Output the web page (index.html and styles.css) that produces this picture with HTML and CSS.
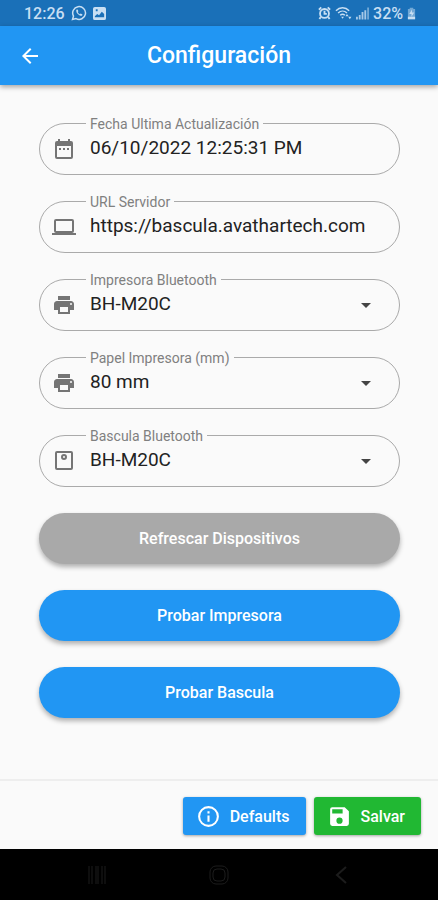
FILE: index.html
```html
<!DOCTYPE html>
<html lang="es">
<head>
  <meta charset="UTF-8">
  <meta name="viewport" content="width=device-width, initial-scale=1.0">
  <title>Configuración</title>
  <link rel="stylesheet" href="styles.css">
</head>
<body>
  <div class="status-bar">
    <div class="status-left">
      <span>12:26</span>
      <svg width="16" height="16" viewBox="0 0 16 16" fill="none" stroke="currentColor" stroke-width="1.5">
        <path d="M1.5 14.5l1-3.4A6.4 6.4 0 1 1 5 13.6z"/>
        <path d="M5.3 4.8c-.6 3 2.6 6.4 5.7 6l.5-1.4-1.8-1-.9.8C7.7 8.7 7 7.900 6.700 7.100l.7-.8-.8-1.800z" fill="currentColor" stroke="none"/>
      </svg>
      <svg width="13" height="13" viewBox="0 0 14 14" fill="currentColor">
        <path fill-rule="evenodd" d="M2 0h10a2 2 0 0 1 2 2v10a2 2 0 0 1-2 2H2a2 2 0 0 1-2-2V2a2 2 0 0 1 2-2zm0 11h10V7.500L9.500 5 6.500 9 4.500 7.500 2 10zM3 2.500v2h2v-2z"/>
      </svg>
    </div>
    <div class="status-right">
      <svg width="13" height="14" viewBox="0 0 14 14" fill="none" stroke="currentColor" stroke-width="2">
        <circle cx="7" cy="7.500" r="4.800"/>
        <path d="M7 4.500V8h2.500M1 3.500L3.500 1M13 3.500L10.500 1M3 11.500l-1.500 2M11 11.500l1.500 2"/>
      </svg>
      <svg width="17" height="14" viewBox="0 0 18 14" fill="none" stroke="currentColor" stroke-width="1.500">
        <path d="M1 4.500c4-4 10-4 14 0M3.300 7c2.800-2.700 6.600-2.700 9.400 0M5.500 9.400c1.500-1.400 3.500-1.400 5 0"/>
        <path d="M6.500 11h3L8 13zM11 10.500l1.700-2.500 1.700 2.500zM14 11h3.400l-1.700 2.500z" fill="currentColor" stroke="none"/>
      </svg>
      <svg width="13" height="13" viewBox="0 0 14 13" fill="currentColor">
        <path d="M0 10h2v3H0zM3 8h2v5H3zM6 5h2v8H6zM9 3h2v10H9z" opacity=".8"/>
        <path d="M12 0h2v13h-2z" opacity=".5"/>
      </svg>
      <span>32%</span>
      <svg width="9" height="13" viewBox="0 0 10 13" fill="currentColor">
        <path d="M3 0h4v1.500h2V13H1V1.500h2z" opacity=".5"/>
        <path d="M5.500 2L2.500 7H5v3l3-4.500H5.500zM1 10h8v3H1z"/>
      </svg>
    </div>
  </div>

  <header class="app-bar">
    <button class="back-btn" type="button" aria-label="Volver">
      <svg width="24" height="24" viewBox="0 0 24 24" fill="currentColor"><path d="M20 11H7.830l5.590-5.590L12 4l-8 8 8 8 1.410-1.410L7.830 13H20v-2z"/></svg>
    </button>
    <h1>Configuración</h1>
  </header>

  <main class="settings">
    <div class="field">
      <label for="fecha">Fecha Ultima Actualización</label>
      <svg class="field-icon" viewBox="0 0 24 24"><path d="M19 4h-1V2h-2v2H8V2H6v2H5a2 2 0 0 0-2 2v14a2 2 0 0 0 2 2h14a2 2 0 0 0 2-2V6a2 2 0 0 0-2-2zm0 16H5V9h14v11zM7 11h2v2H7zm4 0h2v2h-2zm4 0h2v2h-2z"/></svg>
      <input id="fecha" type="text" value="06/10/2022 12:25:31 PM" readonly>
    </div>

    <div class="field">
      <label for="url">URL Servidor</label>
      <svg class="field-icon" viewBox="0 0 24 24"><path d="M20 18a2 2 0 0 0 2-2V6a2 2 0 0 0-2-2H4a2 2 0 0 0-2 2v10a2 2 0 0 0 2 2H0v2h24v-2h-4zM4 6h16v10H4V6z"/></svg>
      <input id="url" type="text" value="https://bascula.avathartech.com">
    </div>

    <div class="field">
      <label for="impresora">Impresora Bluetooth</label>
      <svg class="field-icon" viewBox="0 0 24 24"><path d="M19 8H5c-1.660 0-3 1.340-3 3v6h4v4h12v-4h4v-6c0-1.660-1.340-3-3-3zm-3 11H8v-5h8v5zm3-7a1 1 0 1 1 0-2 1 1 0 0 1 0 2zm-1-9H6v4h12V3z"/></svg>
      <select id="impresora">
        <option>BH-M20C</option>
      </select>
      <svg class="arrow" viewBox="0 0 24 24"><path d="M7 10l5 5 5-5z"/></svg>
    </div>

    <div class="field">
      <label for="papel">Papel Impresora (mm)</label>
      <svg class="field-icon" viewBox="0 0 24 24"><path d="M19 8H5c-1.660 0-3 1.340-3 3v6h4v4h12v-4h4v-6c0-1.660-1.340-3-3-3zm-3 11H8v-5h8v5zm3-7a1 1 0 1 1 0-2 1 1 0 0 1 0 2zm-1-9H6v4h12V3z"/></svg>
      <select id="papel">
        <option>80 mm</option>
      </select>
      <svg class="arrow" viewBox="0 0 24 24"><path d="M7 10l5 5 5-5z"/></svg>
    </div>

    <div class="field">
      <label for="bascula">Bascula Bluetooth</label>
      <svg class="field-icon" viewBox="0 0 24 24"><path fill-rule="evenodd" d="M5 2h14a2 2 0 0 1 2 2v15a2 2 0 0 1-2 2H5a2 2 0 0 1-2-2V4a2 2 0 0 1 2-2zm0 2v15h14V4zM12 5a3 3 0 1 1 0 6 3 3 0 0 1 0-6zm0 2a1 1 0 1 0 0 2 1 1 0 0 0 0-2z"/></svg>
      <select id="bascula">
        <option>BH-M20C</option>
      </select>
      <svg class="arrow" viewBox="0 0 24 24"><path d="M7 10l5 5 5-5z"/></svg>
    </div>

    <button class="pill pill-gray" type="button">Refrescar Dispositivos</button>
    <button class="pill" type="button">Probar Impresora</button>
    <button class="pill" type="button">Probar Bascula</button>
  </main>

  <footer class="actions">
    <button class="action" type="button">
      <svg viewBox="0 0 24 24"><path d="M11 7h2v2h-2zm0 4h2v6h-2zm1-9a10 10 0 1 0 0 20 10 10 0 0 0 0-20zm0 18a8 8 0 1 1 0-16 8 8 0 0 1 0 16z"/></svg>
      Defaults
    </button>
    <button class="action action-green" type="button">
      <svg viewBox="0 0 24 24"><path d="M17 3H5a2 2 0 0 0-2 2v14a2 2 0 0 0 2 2h14a2 2 0 0 0 2-2V7l-4-4zm-5 16a3 3 0 1 1 0-6 3 3 0 0 1 0 6zm3-10H5V5h10v4z"/></svg>
      Salvar
    </button>
  </footer>

  <nav class="nav-bar">
    <button type="button" aria-label="Recientes">
      <svg viewBox="0 0 20 20"><path d="M2 1v18M5 1v18M9 1v18M11 1v18M15 1v18M18 1v18"/></svg>
    </button>
    <button type="button" aria-label="Inicio">
      <svg viewBox="0 0 20 20"><rect x="1" y="1" width="18" height="18" rx="6"/><rect x="4" y="4" width="12" height="12" rx="4"/></svg>
    </button>
    <button type="button" aria-label="Atrás">
      <svg viewBox="0 0 20 20"><path d="M15 2L6 10l9 8" stroke-width="2"/></svg>
    </button>
  </nav>
</body>
</html>
```

FILE: styles.css
```css
* {
  box-sizing: border-box;
}

body {
  margin: 0;
  min-height: 100vh;
  display: flex;
  flex-direction: column;
  font-family: Roboto, "Liberation Sans", sans-serif;
  background-color: #fafafa;
}

button {
  font-family: inherit;
  border: none;
  cursor: pointer;
}

/* Phone status bar */
.status-bar {
  display: flex;
  justify-content: space-between;
  align-items: center;
  height: 26px;
  padding: 0 22px 0 24px;
  background-color: #1a70b8;
  color: #c8dff3;
  font-size: 16px;
  font-weight: 500;
}

.status-left {
  display: flex;
  align-items: center;
  gap: 6px;
}

.status-right {
  display: flex;
  align-items: center;
  gap: 4px;
}

/* Title bar */
.app-bar {
  display: grid;
  grid-template-columns: 48px 1fr 48px;
  align-items: center;
  height: 59px;
  padding: 0 6px;
  background-color: #2196f3;
  color: #fff;
  box-shadow: 0 2px 5px rgba(0, 0, 0, 0.35);
}

.app-bar h1 {
  margin: 0;
  font-size: 23px;
  font-weight: 500;
  text-align: center;
}

.back-btn {
  display: flex;
  justify-content: center;
  padding: 12px;
  background: none;
  color: inherit;
}

/* Form */
.settings {
  flex: 1;
  display: flex;
  flex-direction: column;
  gap: 26px;
  padding: 38px 38px 26px 39px;
}

.field {
  position: relative;
  display: flex;
  align-items: center;
  height: 52px;
  padding: 0 21px 0 12px;
  border: 1px solid #aaa;
  border-radius: 26px;
}

.field label {
  position: absolute;
  top: -8px;
  left: 46px;
  padding: 0 4px;
  background-color: #fafafa;
  color: #808080;
  font-size: 14px;
  line-height: 16px;
}

.field-icon {
  flex: none;
  width: 24px;
  height: 24px;
  fill: #757575;
}

.field input,
.field select {
  flex: 1;
  min-width: 0;
  height: 48px;
  margin-left: 14px;
  padding: 0 0 4px;
  border: none;
  outline: none;
  background: none;
  color: #222;
  font-family: inherit;
  font-size: 19px;
  appearance: none;
}

.arrow {
  flex: none;
  width: 24px;
  height: 24px;
  fill: #444;
  pointer-events: none;
}

.pill {
  height: 51px;
  border-radius: 26px;
  background-color: #2196f3;
  color: #fff;
  font-size: 16px;
  font-weight: 500;
  box-shadow: 0 3px 5px rgba(0, 0, 0, 0.3);
}

.pill-gray {
  background-color: #a9a9a9;
}

/* Bottom buttons */
.actions {
  display: flex;
  justify-content: flex-end;
  gap: 8px;
  padding: 16px 17px 14px;
  border-top: 2px solid #eee;
}

.action {
  display: flex;
  align-items: center;
  gap: 9px;
  height: 38px;
  padding: 0 16px 0 13px;
  border-radius: 3px;
  background-color: #2196f3;
  color: #fff;
  font-size: 16px;
  font-weight: 500;
  box-shadow: 0 1px 3px rgba(0, 0, 0, 0.35);
}

.action svg {
  width: 25px;
  height: 25px;
  fill: currentColor;
}

.action-green {
  background-color: #21b833;
}

/* Phone navigation buttons */
.nav-bar {
  display: flex;
  justify-content: space-around;
  align-items: center;
  height: 51px;
  padding: 0 36px;
  background-color: #000;
}

.nav-bar button {
  display: flex;
  padding: 10px;
  background: none;
}

.nav-bar svg {
  width: 20px;
  height: 20px;
  fill: none;
  stroke: #1c1c1c;
  stroke-width: 1;
}
```
